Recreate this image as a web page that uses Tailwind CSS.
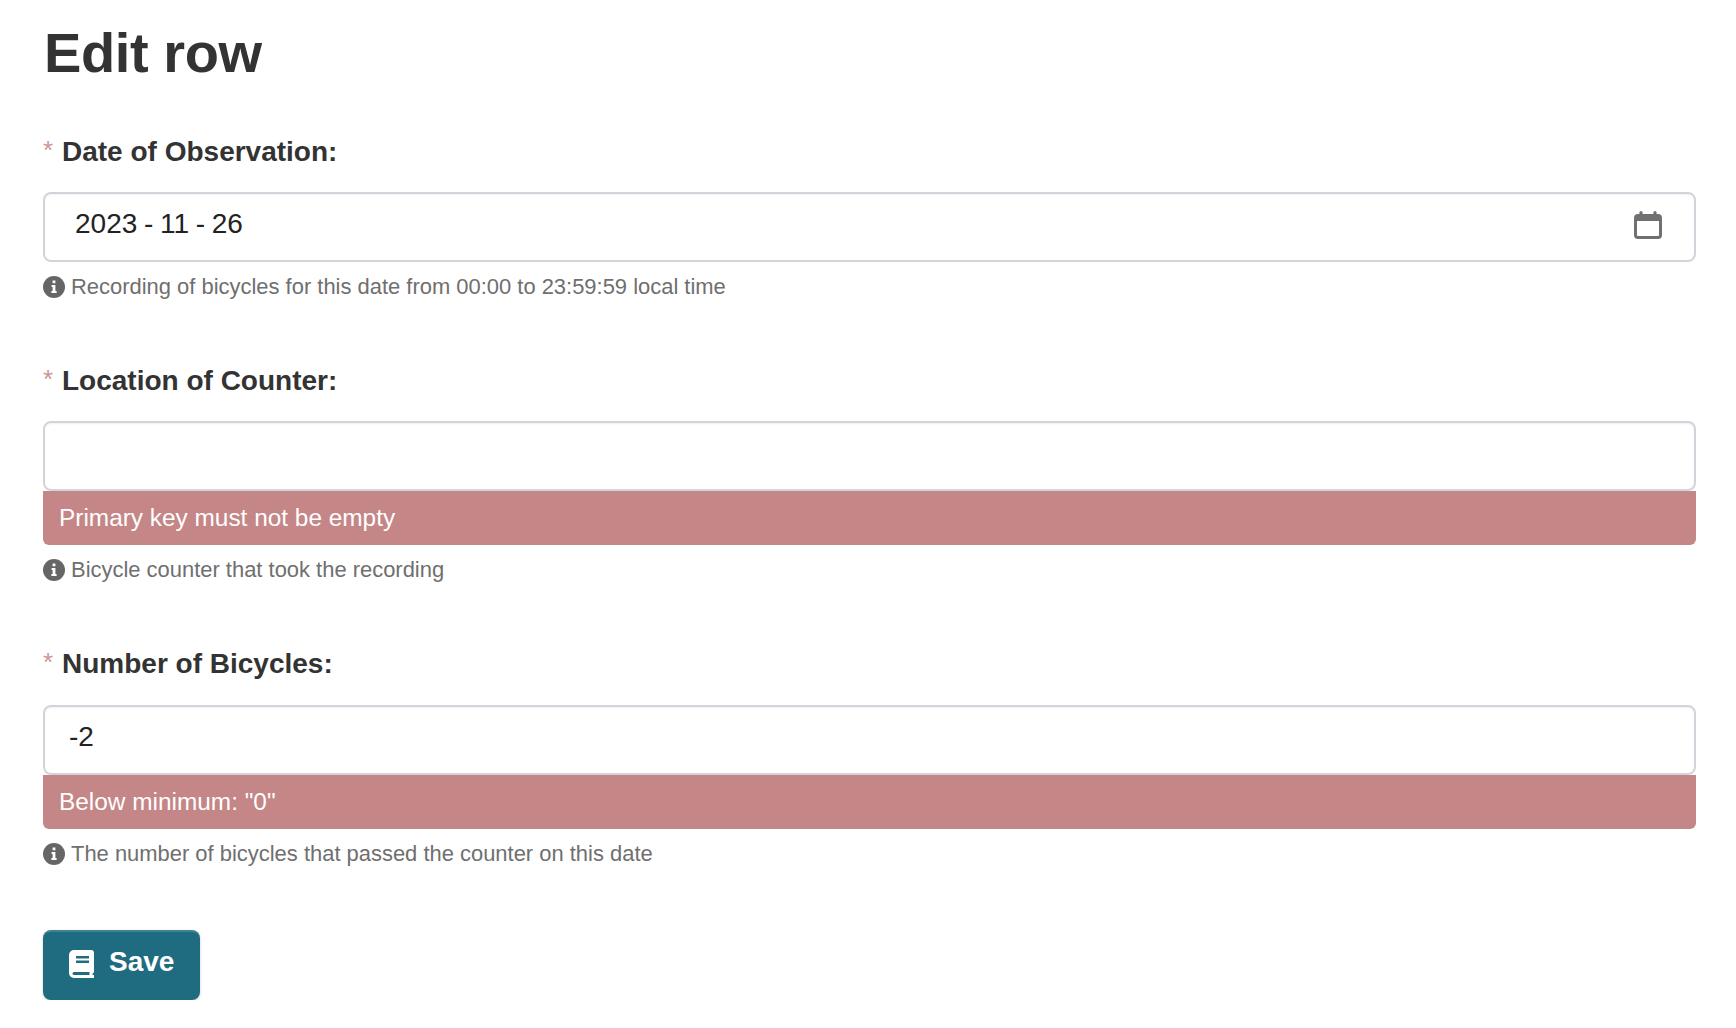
<!DOCTYPE html>
<html lang="en">
<head>
<meta charset="utf-8"/>
<title>Edit row</title>
<script src="https://cdn.jsdelivr.net/npm/@tailwindcss/browser@4"></script>
</head>
<body class="bg-white font-['Liberation_Sans',Arial,sans-serif] text-[#333]">
<main class="pl-[43px] pr-[40px] pt-[18px]">
  <h1 class="ml-[1px] text-[56px] leading-[70px] font-bold tracking-[-0.4px] text-[#333]">Edit row</h1>

  <section class="mt-[45px]">
    <label class="flex items-center h-[38px] text-[28px] font-bold text-[#333]"><span class="w-[19px] -mt-[3px] text-[26px] font-normal text-[#cc9494]">*</span>Date of Observation:</label>
    <div class="mt-[21px] h-[70px] border-2 border-[#d1d5db] rounded-[8px] flex items-center justify-between pl-[30px] pr-[32px] shadow-[inset_0_1px_2px_rgba(0,0,0,0.06)]">
      <span class="text-[28px] text-[#222] -mt-[6px] whitespace-pre [word-spacing:-1.100px]">2023 - 11 - 26</span>
      <svg class="w-[28px] h-[28px] -mt-[4px] text-[#707070]" viewBox="0 0 28 28" fill="currentColor"><path d="M7 0a1.6 1.6 0 0 1 1.6 1.6V3h10.8V1.6a1.6 1.6 0 0 1 3.2 0V3H24a4 4 0 0 1 4 4v17a4 4 0 0 1-4 4H4a4 4 0 0 1-4-4V7a4 4 0 0 1 4-4h1.4V1.6A1.6 1.6 0 0 1 7 0zM3 10v14a1 1 0 0 0 1 1h20a1 1 0 0 0 1-1V10z"/></svg>
    </div>
    <p class="mt-[12px] flex items-center gap-[6px] h-[26px] text-[21.940px] text-[#6f6f6f]">
      <svg class="w-[22px] h-[22px] shrink-0" viewBox="0 0 22 22"><circle cx="11" cy="11" r="11" fill="#666"/><path fill="#fff" d="M9.6 4.5h2.8v2.8H9.6zM8.6 9h3.8v6h1.2v2H8.4v-2h1.2v-4h-1z"/></svg>
      Recording of bicycles for this date from 00:00 to 23:59:59 local time
    </p>
  </section>

  <section class="mt-[62px]">
    <label class="flex items-center h-[38px] text-[28px] font-bold text-[#333]"><span class="w-[19px] -mt-[3px] text-[26px] font-normal text-[#cc9494]">*</span>Location of Counter:</label>
    <div class="mt-[21px] h-[70px] border-2 border-[#d1d5db] rounded-[8px] shadow-[inset_0_1px_2px_rgba(0,0,0,0.06)]"></div>
    <div class="h-[54px] pt-[1px] bg-[#c48686] text-white text-[24.400px] flex items-center pl-[16px] rounded-b-[6px]">Primary key must not be empty</div>
    <p class="mt-[12px] flex items-center gap-[6px] h-[26px] text-[21.940px] text-[#6f6f6f]">
      <svg class="w-[22px] h-[22px] shrink-0" viewBox="0 0 22 22"><circle cx="11" cy="11" r="11" fill="#666"/><path fill="#fff" d="M9.6 4.5h2.8v2.8H9.6zM8.6 9h3.8v6h1.2v2H8.4v-2h1.2v-4h-1z"/></svg>
      Bicycle counter that took the recording
    </p>
  </section>

  <section class="mt-[62px]">
    <label class="flex items-center h-[38px] text-[28px] font-bold text-[#333]"><span class="w-[19px] -mt-[3px] text-[26px] font-normal text-[#cc9494]">*</span>Number of Bicycles:</label>
    <div class="mt-[22px] h-[70px] border-2 border-[#d1d5db] rounded-[8px] flex items-center pl-[24px] shadow-[inset_0_1px_2px_rgba(0,0,0,0.06)]">
      <span class="text-[28px] text-[#222] -mt-[6px]">-2</span>
    </div>
    <div class="h-[54px] pt-[1px] bg-[#c48686] text-white text-[24.400px] flex items-center pl-[16px] rounded-b-[6px]">Below minimum: "0"</div>
    <p class="mt-[12px] flex items-center gap-[6px] h-[26px] text-[21.940px] text-[#6f6f6f]">
      <svg class="w-[22px] h-[22px] shrink-0" viewBox="0 0 22 22"><circle cx="11" cy="11" r="11" fill="#666"/><path fill="#fff" d="M9.6 4.5h2.8v2.8H9.6zM8.6 9h3.8v6h1.2v2H8.4v-2h1.2v-4h-1z"/></svg>
      The number of bicycles that passed the counter on this date
    </p>
  </section>

  <button class="mt-[63px] w-[157px] h-[70px] bg-[#1f6b80] rounded-[8px] border-t-2 border-[#3f8397] shadow-[0_1px_3px_rgba(0,0,0,0.2)] flex items-center pl-[26px] gap-[15px] text-white text-[28px] font-bold">
    <svg class="w-[25px] h-[28px] -mt-[4px]" viewBox="0 0 25 28" fill="#fff"><path d="M5 0h17a3 3 0 0 1 3 3v18.5c0 1-.6 1.7-1.5 2v1.5h1a1.5 1.5 0 0 1 0 3H5a5 5 0 0 1-5-5V5a5 5 0 0 1 5-5zM7 6v2.400h13V6zM7 10.500v2.400h13V10.500zM5 22a1.500 1.500 0 0 0 0 3h15.500v-3z"/></svg>
    <span class="-mt-[8px]">Save</span>
  </button>
</main>
</body>
</html>
